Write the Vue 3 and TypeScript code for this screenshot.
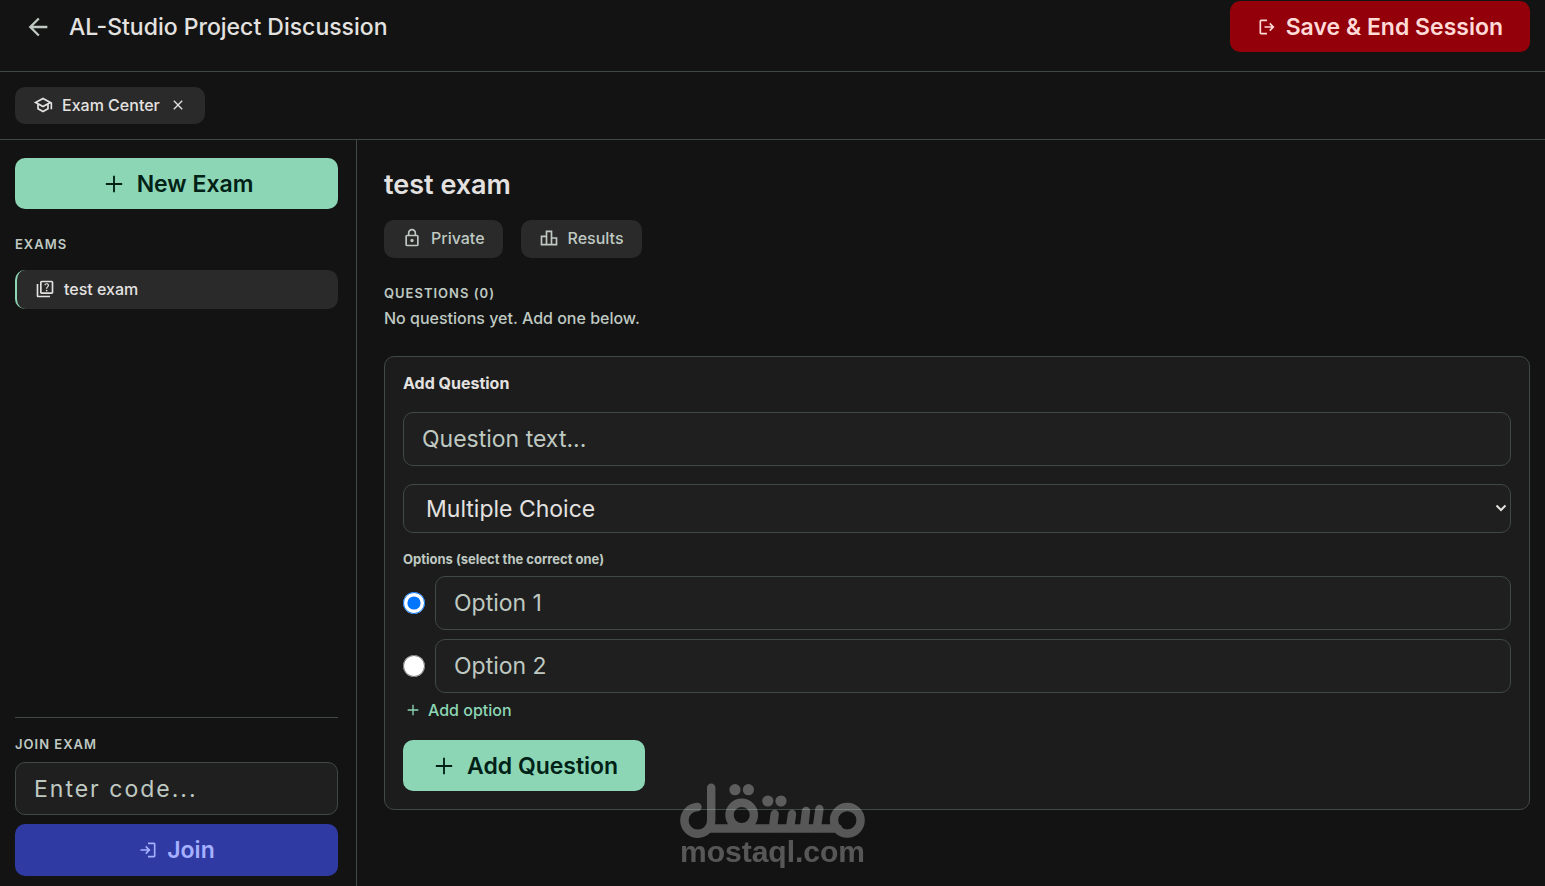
<script setup lang="ts">
import { ref } from 'vue'

interface Exam {
  id: number
  name: string
}

const exams = ref<Exam[]>([{ id: 1, name: 'test exam' }])
const activeId = ref(1)
const joinCode = ref('')
const questionText = ref('')
const questionType = ref('multiple')
const options = ref<string[]>(['', ''])
const correct = ref(0)

function addOption(): void {
  options.value.push('')
}
</script>

<template>
  <div class="app">
    <header class="topbar">
      <button class="icon-btn" type="button" aria-label="Back">
        <svg class="icon-28" viewBox="0 0 24 24"><path d="M20 11H7.83l5.59-5.59L12 4l-8 8 8 8 1.41-1.41L7.83 13H20v-2z" /></svg>
      </button>
      <h1 class="title">AL-Studio Project Discussion</h1>
      <button class="btn btn-danger" type="button">
        <svg class="icon-20" viewBox="0 0 24 24"><path d="M5 21q-.83 0-1.41-.59T3 19V5q0-.83.59-1.41T5 3h7v2H5v14h7v2zm11-4-1.38-1.45L17.18 13H9v-2h8.18l-2.56-2.55L16 7l5 5z" /></svg>
        Save &amp; End Session
      </button>
    </header>

    <nav class="tabs">
      <div class="tab">
        <svg class="icon-20" viewBox="0 0 24 24"><path d="M12 3L1 9l4 2.18v6L12 21l7-3.82v-6l2-1.09V17h2V9L12 3zm6.82 6L12 12.72 5.18 9 12 5.28 18.82 9zM17 15.99l-5 2.73-5-2.73v-3.72L12 15l5-2.73v3.72z" /></svg>
        <span>Exam Center</span>
        <button class="tab-close" type="button" aria-label="Close tab">
          <svg class="icon-16" viewBox="0 0 24 24"><path d="M19 6.41L17.59 5 12 10.59 6.41 5 5 6.41 10.59 12 5 17.59 6.41 19 12 13.41 17.59 19 19 17.59 13.41 12z" /></svg>
        </button>
      </div>
    </nav>

    <div class="body">
      <aside class="sidebar">
        <button class="btn btn-primary" type="button">
          <svg class="icon-28" viewBox="0 0 24 24"><path d="M11.2 19v-6.2H5v-1.6h6.2V5h1.6v6.2H19v1.6h-6.2V19z" /></svg>
          New Exam
        </button>
        <h2 class="overline exams-label">Exams</h2>
        <ul class="exam-list">
          <li v-for="exam in exams" :key="exam.id">
            <button class="exam" :class="{ active: exam.id === activeId }" type="button" @click="activeId = exam.id">
              <svg class="icon-20" viewBox="0 0 24 24"><path fill-rule="evenodd" d="M4 6H2v14c0 1.1.9 2 2 2h14v-2H4V6zM20 2H8c-1.1 0-2 .9-2 2v12c0 1.1.9 2 2 2h12c1.1 0 2-.9 2-2V4c0-1.1-.9-2-2-2zm0 14H8V4h12v12z" /><path d="M13.51 10.16c.41-.73 1.18-1.16 1.63-1.8.48-.68.21-1.94-1.14-1.94-.88 0-1.32.67-1.5 1.23l-1.37-.57C11.51 5.96 12.52 5 13.99 5c1.23 0 2.08.56 2.51 1.26.37.6.58 1.73.01 2.57-.63.93-1.23 1.21-1.56 1.81-.13.24-.18.4-.18 1.18h-1.52c.01-.41-.06-1.08.26-1.66zm-.56 3.79c0-.59.47-1.04 1.05-1.04.59 0 1.04.45 1.04 1.04 0 .58-.44 1.05-1.04 1.05-.58 0-1.05-.47-1.05-1.05z" /></svg>
              {{ exam.name }}
            </button>
          </li>
        </ul>
        <form class="join" @submit.prevent>
          <label class="overline" for="join-code">Join Exam</label>
          <input id="join-code" v-model="joinCode" class="field code" type="text" placeholder="Enter code..." />
          <button class="btn btn-join" type="submit">
            <svg class="icon-20" viewBox="0 0 24 24"><path d="M12 21v-2h7V5h-7V3h7q.83 0 1.41.59T21 5v14q0 .83-.59 1.41T19 21zm-2-4-1.38-1.45L11.18 13H3v-2h8.18L8.62 8.45 10 7l5 5z" /></svg>
            Join
          </button>
        </form>
      </aside>

      <main class="content">
        <h2 class="exam-title">test exam</h2>
        <div class="chips">
          <button class="chip" type="button">
            <svg class="icon-20" viewBox="0 0 24 24"><path fill-rule="evenodd" d="M6 22q-.83 0-1.41-.59T4 20V10q0-.83.59-1.41T6 8h1V6q0-2.08 1.46-3.54T12 1t3.54 1.46T17 6v2h1q.83 0 1.41.59T20 10v10q0 .83-.59 1.41T18 22zm0-2h12V10H6zm6-3q.83 0 1.41-.59T14 15t-.59-1.41T12 13t-1.41.59T10 15t.59 1.41T12 17zM9 8h6V6q0-1.25-.88-2.13T12 3t-2.13.88T9 6z" /></svg>
            Private
          </button>
          <button class="chip" type="button">
            <svg class="icon-20" viewBox="0 0 24 24"><path d="M16 11V3H8v6H2v12h20V11h-6zm-6-6h4v14h-4V5zm-6 6h4v8H4v-8zm16 8h-4v-6h4v6z" /></svg>
            Results
          </button>
        </div>
        <h3 class="overline">Questions (0)</h3>
        <p class="empty">No questions yet. Add one below.</p>

        <form class="card" @submit.prevent>
          <h3 class="card-title">Add Question</h3>
          <input v-model="questionText" class="field" type="text" placeholder="Question text..." aria-label="Question text" />
          <div class="select-wrap">
            <select v-model="questionType" class="field select" aria-label="Question type">
              <option value="multiple">Multiple Choice</option>
              <option value="boolean">True / False</option>
            </select>
            <svg class="chevron" viewBox="0 0 12 8"><path d="M1.5 1.5 6 6l4.5-4.5" /></svg>
          </div>
          <fieldset class="options">
            <legend class="legend">Options (select the correct one)</legend>
            <div v-for="(_, i) in options" :key="i" class="option">
              <input v-model="correct" class="radio" type="radio" name="correct" :value="i" :aria-label="`Option ${i + 1} is correct`" />
              <input v-model="options[i]" class="field" type="text" :placeholder="`Option ${i + 1}`" :aria-label="`Option ${i + 1}`" />
            </div>
          </fieldset>
          <button class="add-option" type="button" @click="addOption">
            <svg class="icon-16" viewBox="0 0 24 24"><path d="M11 20v-7H4v-2h7V4h2v7h7v2h-7v7z" /></svg>
            Add option
          </button>
          <button class="btn btn-primary submit" type="submit">
            <svg class="icon-28" viewBox="0 0 24 24"><path d="M11.2 19v-6.2H5v-1.6h6.2V5h1.6v6.2H19v1.6h-6.2V19z" /></svg>
            Add Question
          </button>
        </form>
      </main>
    </div>

    <svg class="watermark" viewBox="0 0 186 88" role="img" aria-label="مستقل mostaql.com">
      <g fill="none" stroke="#fff" stroke-width="8.4" stroke-linecap="round">
        <path d="M17.5 24A13.4 13.4 0 1 0 31.2 37.4V4.8" />
        <path d="M30 45.5H158" />
        <circle cx="61.7" cy="32" r="12.2" />
        <path d="M94.7 31 93 45M112 31 110 45M126 28 124 45M139.4 26 136.8 45" />
        <circle cx="167.3" cy="37.3" r="13.3" />
      </g>
      <g fill="#fff">
        <circle cx="55" cy="6.7" r="5.6" />
        <circle cx="68.4" cy="6.7" r="5.6" />
        <circle cx="87.8" cy="18" r="5.6" />
        <circle cx="101" cy="18" r="5.6" />
        <text x="0" y="79" class="wm-text">mostaql.com</text>
      </g>
    </svg>
  </div>
</template>

<style>
body {
  background: #131313;
}
</style>

<style scoped>
.app {
  display: flex;
  flex-direction: column;
  min-height: 100vh;
  box-sizing: border-box;
  background: #131313;
  color: #e4e2e0;
  font-family: Inter, "Liberation Sans", sans-serif;
  font-size: 16px;
  font-weight: 500;
  line-height: 24px;
}
.app *,
.app *::before {
  box-sizing: border-box;
}
h1, h2, h3, p, ul {
  margin: 0;
  padding: 0;
}
button, input, select {
  font: inherit;
  color: inherit;
}
button {
  border: 0;
  background: none;
  padding: 0;
  cursor: pointer;
}
svg {
  display: block;
  flex: none;
  fill: currentColor;
}
.icon-16 { width: 16px; height: 16px; }
.icon-20 { width: 20px; height: 20px; }
.icon-28 { width: 28px; height: 28px; }

.topbar {
  display: flex;
  align-items: center;
  padding: 1px 15px 19px 24px;
  border-bottom: 1px solid #404944;
}
.icon-btn {
  color: #bfc9c2;
}
.title {
  flex: 1;
  margin-left: 17px;
  font-size: 23px;
  font-weight: 500;
  line-height: 28px;
}
.btn {
  display: flex;
  align-items: center;
  justify-content: center;
  gap: 9px;
  height: 51px;
  padding: 0 27px;
  border-radius: 10px;
  font-size: 23px;
  font-weight: 600;
}
.btn-danger {
  background: #93000a;
  color: #ffdad6;
}
.btn-primary {
  background: #8cd6b5;
  color: #002116;
}
.btn-join {
  height: 52px;
  background: #2f3aa3;
  color: #a5b0ff;
}

.tabs {
  display: flex;
  padding: 15px;
  border-bottom: 1px solid #404944;
}
.tab {
  display: flex;
  align-items: center;
  gap: 9px;
  height: 37px;
  padding: 0 18px 2px;
  border-radius: 10px;
  background: #2a2a2a;
}
.tab-close {
  padding: 1px;
}

.body {
  display: flex;
  flex: 1;
}
.sidebar {
  display: flex;
  flex-direction: column;
  flex: none;
  width: 357px;
  padding: 18px 18px 10px 15px;
  border-right: 1px solid #404944;
}
.overline {
  display: block;
  color: #bfc9c2;
  font-size: 13px;
  font-weight: 600;
  line-height: 18px;
  letter-spacing: 1px;
  text-transform: uppercase;
}
.exams-label {
  margin: 26px 0 17px;
}
.exam-list {
  list-style: none;
}
.exam {
  display: flex;
  align-items: center;
  gap: 9px;
  width: 100%;
  height: 39px;
  padding: 0 18px 2px;
  border-left: 2px solid transparent;
  border-radius: 10px;
}
.exam.active {
  background: #2a2a2a;
  border-left-color: #8cd6b5;
}
.join {
  display: flex;
  flex-direction: column;
  gap: 9px;
  margin-top: auto;
  padding-top: 17px;
  border-top: 1px solid #404944;
}
.field {
  width: 100%;
  height: 54px;
  padding: 0 18px;
  border: 1px solid #404944;
  border-radius: 10px;
  background: #1f1f1f;
  font-size: 23px;
  font-weight: 400;
}
.field::placeholder {
  color: #bfc9c2;
  opacity: 1;
}
.field.code {
  height: 53px;
  letter-spacing: 2px;
}

.content {
  flex: 1;
  min-width: 0;
  padding: 27px 15px 27px 27px;
}
.exam-title {
  font-size: 27px;
  font-weight: 600;
  line-height: 36px;
}
.chips {
  display: flex;
  gap: 18px;
  margin: 17px 0 26px;
}
.chip {
  display: flex;
  align-items: center;
  gap: 9px;
  height: 38px;
  padding: 0 18px 2px;
  border-radius: 10px;
  background: #2a2a2a;
  color: #bfc9c2;
}
.empty {
  margin-top: 4px;
  color: #bfc9c2;
}
.card {
  display: flex;
  flex-direction: column;
  margin-top: 26px;
  padding: 14px 18px 18px;
  border: 1px solid #404944;
  border-radius: 10px;
  background: #1c1c1c;
}
.card-title {
  margin-bottom: 17px;
  font-size: 16px;
  font-weight: 700;
}
.select-wrap {
  position: relative;
  margin: 18px 0 17px;
}
.field.select {
  display: block;
  height: 49px;
  padding: 0 22px;
  appearance: none;
}
.chevron {
  position: absolute;
  top: 20px;
  right: 4px;
  width: 12px;
  height: 8px;
  fill: none;
  stroke: currentColor;
  stroke-width: 2;
  pointer-events: none;
}
.options {
  min-width: 0;
  margin: 0;
  padding: 0;
  border: 0;
}
.legend {
  margin-bottom: 8px;
  padding: 0;
  color: #bfc9c2;
  font-size: 13px;
  font-weight: 700;
  line-height: 18px;
}
.option {
  display: flex;
  align-items: center;
  gap: 10px;
  margin-bottom: 9px;
}
.radio {
  flex: none;
  width: 22px;
  height: 22px;
  margin: 0;
}
.add-option {
  display: flex;
  align-items: center;
  align-self: flex-start;
  gap: 7px;
  margin: -4px 0 18px 2px;
  color: #8cd6b5;
}
.submit {
  align-self: flex-start;
}
.watermark {
  position: fixed;
  bottom: 15px;
  left: 50%;
  width: 186px;
  height: 88px;
  transform: translateX(-50%);
  opacity: 0.29;
  pointer-events: none;
}
.wm-text {
  font-family: "Liberation Sans", Arial, sans-serif;
  font-size: 30px;
  font-weight: 700;
}
</style>
